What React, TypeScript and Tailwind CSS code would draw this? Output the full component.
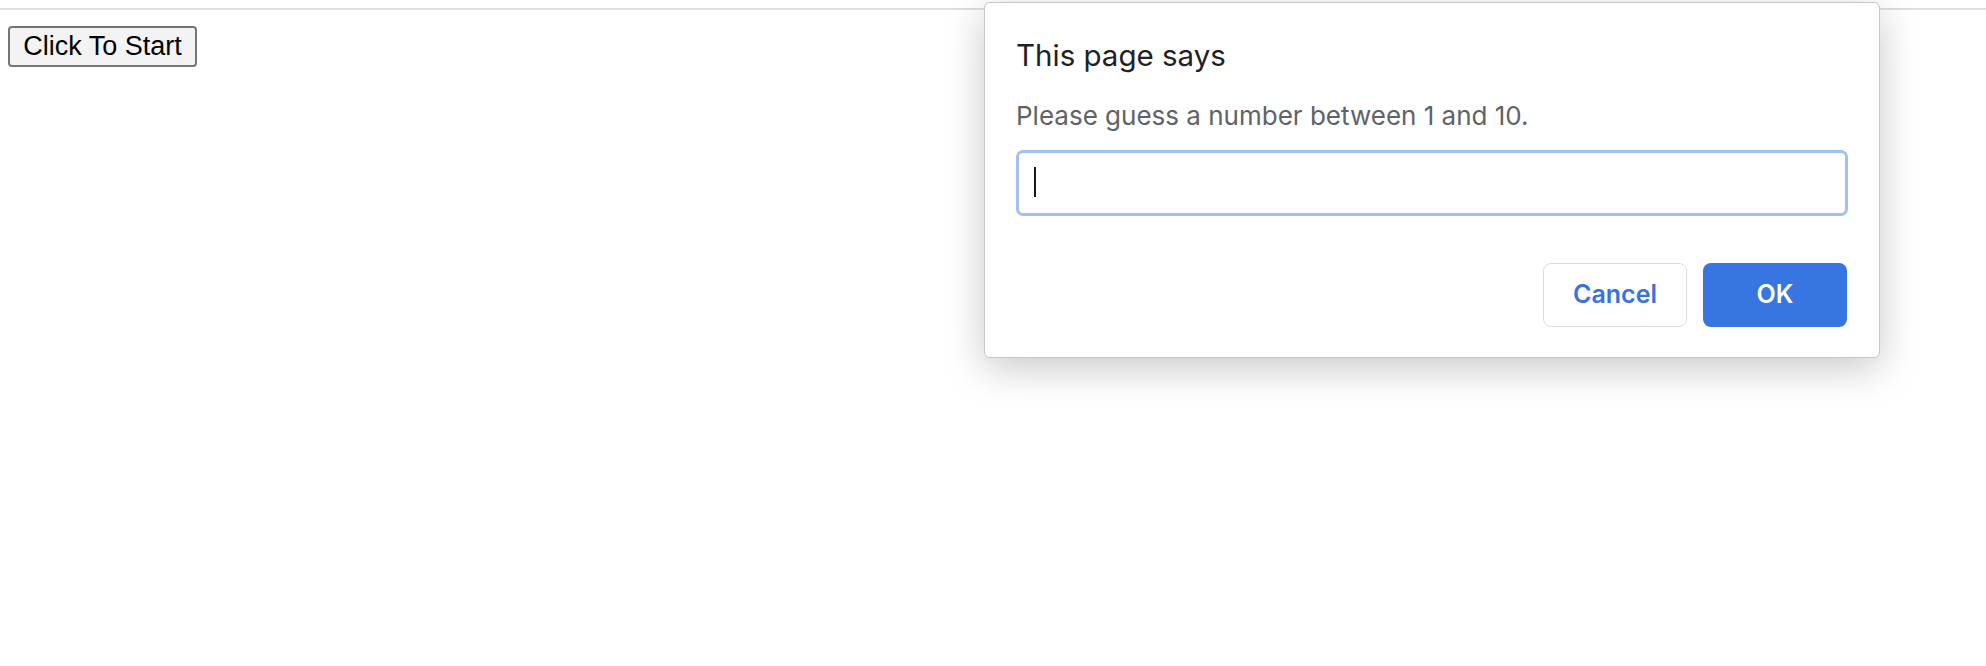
export default function App() {
  return (
    <div className="relative h-[666px] w-full overflow-hidden bg-white">
      {/* page */}
      <div className="h-2" />
      <div className="h-[2px] bg-[#dedede]" />
      <div className="pl-2 pt-4">
        <button className="h-[41px] w-[189px] rounded-[4px] border-2 border-[#767676] bg-[#f3f3f3] font-['Liberation_Sans',Arial,sans-serif] text-[27px] leading-none text-black">
          Click To Start
        </button>
      </div>

      {/* prompt dialog */}
      <div className="absolute left-[984px] top-[2px] flex h-[356px] w-[896px] flex-col rounded-[6px] border border-[#c6c6c6] bg-white px-[31px] pt-[34px] font-['Inter',sans-serif] shadow-[0_10px_40px_rgba(0,0,0,0.22)]">
        <div className="text-[29.5px] leading-[36px] text-[#202124]">This page says</div>
        <div className="mt-[28px] text-[26px] leading-[30px] text-[#5f6368]">
          Please guess a number between 1 and 10.
        </div>
        <div className="mt-[19px] flex h-[66px] items-start rounded-[7px] border-[3px] border-[#a3c0f2] pl-[15px] pt-[14px]">
          <span className="h-[30px] w-[2px] bg-[#1a1a1a]" />
        </div>
        <div className="mt-[47px] flex justify-end gap-4 pr-[1px]">
          <button className="h-16 w-[144px] rounded-[8px] border border-[#dadce0] bg-white text-[25px] font-semibold text-[#3773e0]">
            Cancel
          </button>
          <button className="h-16 w-[144px] rounded-[8px] bg-[#3775e0] text-[25px] font-semibold text-white">
            OK
          </button>
        </div>
      </div>
    </div>
  );
}
